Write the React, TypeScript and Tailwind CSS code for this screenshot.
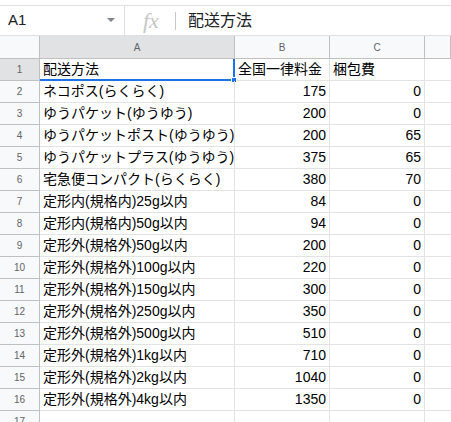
import React from "react";

const rows: [string, string, string][] = [
  ["配送方法", "全国一律料金", "梱包費"],
  ["ネコポス(らくらく)", "175", "0"],
  ["ゆうパケット(ゆうゆう)", "200", "0"],
  ["ゆうパケットポスト(ゆうゆう)", "200", "65"],
  ["ゆうパケットプラス(ゆうゆう)", "375", "65"],
  ["宅急便コンパクト(らくらく)", "380", "70"],
  ["定形内(規格内)25g以内", "84", "0"],
  ["定形内(規格内)50g以内", "94", "0"],
  ["定形外(規格外)50g以内", "200", "0"],
  ["定形外(規格外)100g以内", "220", "0"],
  ["定形外(規格外)150g以内", "300", "0"],
  ["定形外(規格外)250g以内", "350", "0"],
  ["定形外(規格外)500g以内", "510", "0"],
  ["定形外(規格外)1kg以内", "710", "0"],
  ["定形外(規格外)2kg以内", "1040", "0"],
  ["定形外(規格外)4kg以内", "1350", "0"],
  ["", "", ""],
];

const font = { fontFamily: '"Liberation Sans", Arial, "Noto Sans CJK JP", sans-serif' };

function FormulaBar() {
  return (
    <div className="mt-[5px] flex h-[31px] items-center border-y border-[#e0e0e0] bg-white">
      <div className="flex h-full w-[125px] items-center justify-between border-r border-[#e0e0e0] pl-[8px] pr-[9px]">
        <span className="text-[15px] text-[#202124]">A1</span>
        <svg width="8" height="5" viewBox="0 0 8 5">
          <path d="M0 0h8L4 4z" fill="#80868b" />
        </svg>
      </div>
      <div className="flex h-full items-center pl-[18px]">
        <span className="font-serif text-[22px] italic leading-none text-[#c4c7c5]" style={{ fontFamily: '"Liberation Serif", serif' }}>
          fx
        </span>
        <div className="ml-[16px] h-[18px] w-px bg-[#c7c7c7]" />
        <span className="ml-[12px] text-[16px] text-[#202124]">配送方法</span>
      </div>
    </div>
  );
}

export default function App() {
  return (
    <div className="h-[422px] w-[451px] overflow-hidden bg-white" style={font}>
      <FormulaBar />
      <div className="grid grid-cols-[40px_195px_95px_95px_1fr]">
        <div className="h-[23px] border-b border-r border-[#c0c0c0] bg-[#f8f9fa]" />
        {["A", "B", "C", ""].map((c, i) => (
          <div
            key={i}
            className={`flex h-[23px] items-center justify-center border-b border-r border-[#c0c0c0] text-[10px] text-[#5f6368] ${
              i === 0 ? "bg-[#e1e2e3]" : "bg-[#f8f9fa]"
            }`}
          >
            {c}
          </div>
        ))}
        {rows.map((r, i) => (
          <React.Fragment key={i}>
            <div
              className={`flex h-[22px] items-center justify-center border-b border-r border-[#c0c0c0] text-[10px] text-[#5f6368] ${
                i === 0 ? "bg-[#e1e2e3]" : "bg-[#f8f9fa]"
              }`}
            >
              {i + 1}
            </div>
            <div
              className={`relative flex h-[22px] items-center overflow-visible whitespace-nowrap border-b border-r px-[3px] text-[14px] text-black ${
                i === 0 ? "border-[#1a73e8] border-b-2 border-r-2" : "border-[#e2e3e3]"
              }`}
            >
              {r[0]}
              {i === 0 && (
                <div className="absolute bottom-[-4px] right-[-4px] h-[6px] w-[6px] border border-white bg-[#1a73e8]" />
              )}
            </div>
            <div
              className={`flex h-[22px] items-center whitespace-nowrap border-b border-r border-[#e2e3e3] px-[3px] text-[14px] text-black ${
                i === 0 ? "justify-start" : "justify-end"
              }`}
            >
              {r[1]}
            </div>
            <div
              className={`flex h-[22px] items-center whitespace-nowrap border-b border-r border-[#e2e3e3] px-[3px] text-[14px] text-black ${
                i === 0 ? "justify-start" : "justify-end"
              }`}
            >
              {r[2]}
            </div>
            <div className="h-[22px] border-b border-[#e2e3e3]" />
          </React.Fragment>
        ))}
      </div>
    </div>
  );
}
